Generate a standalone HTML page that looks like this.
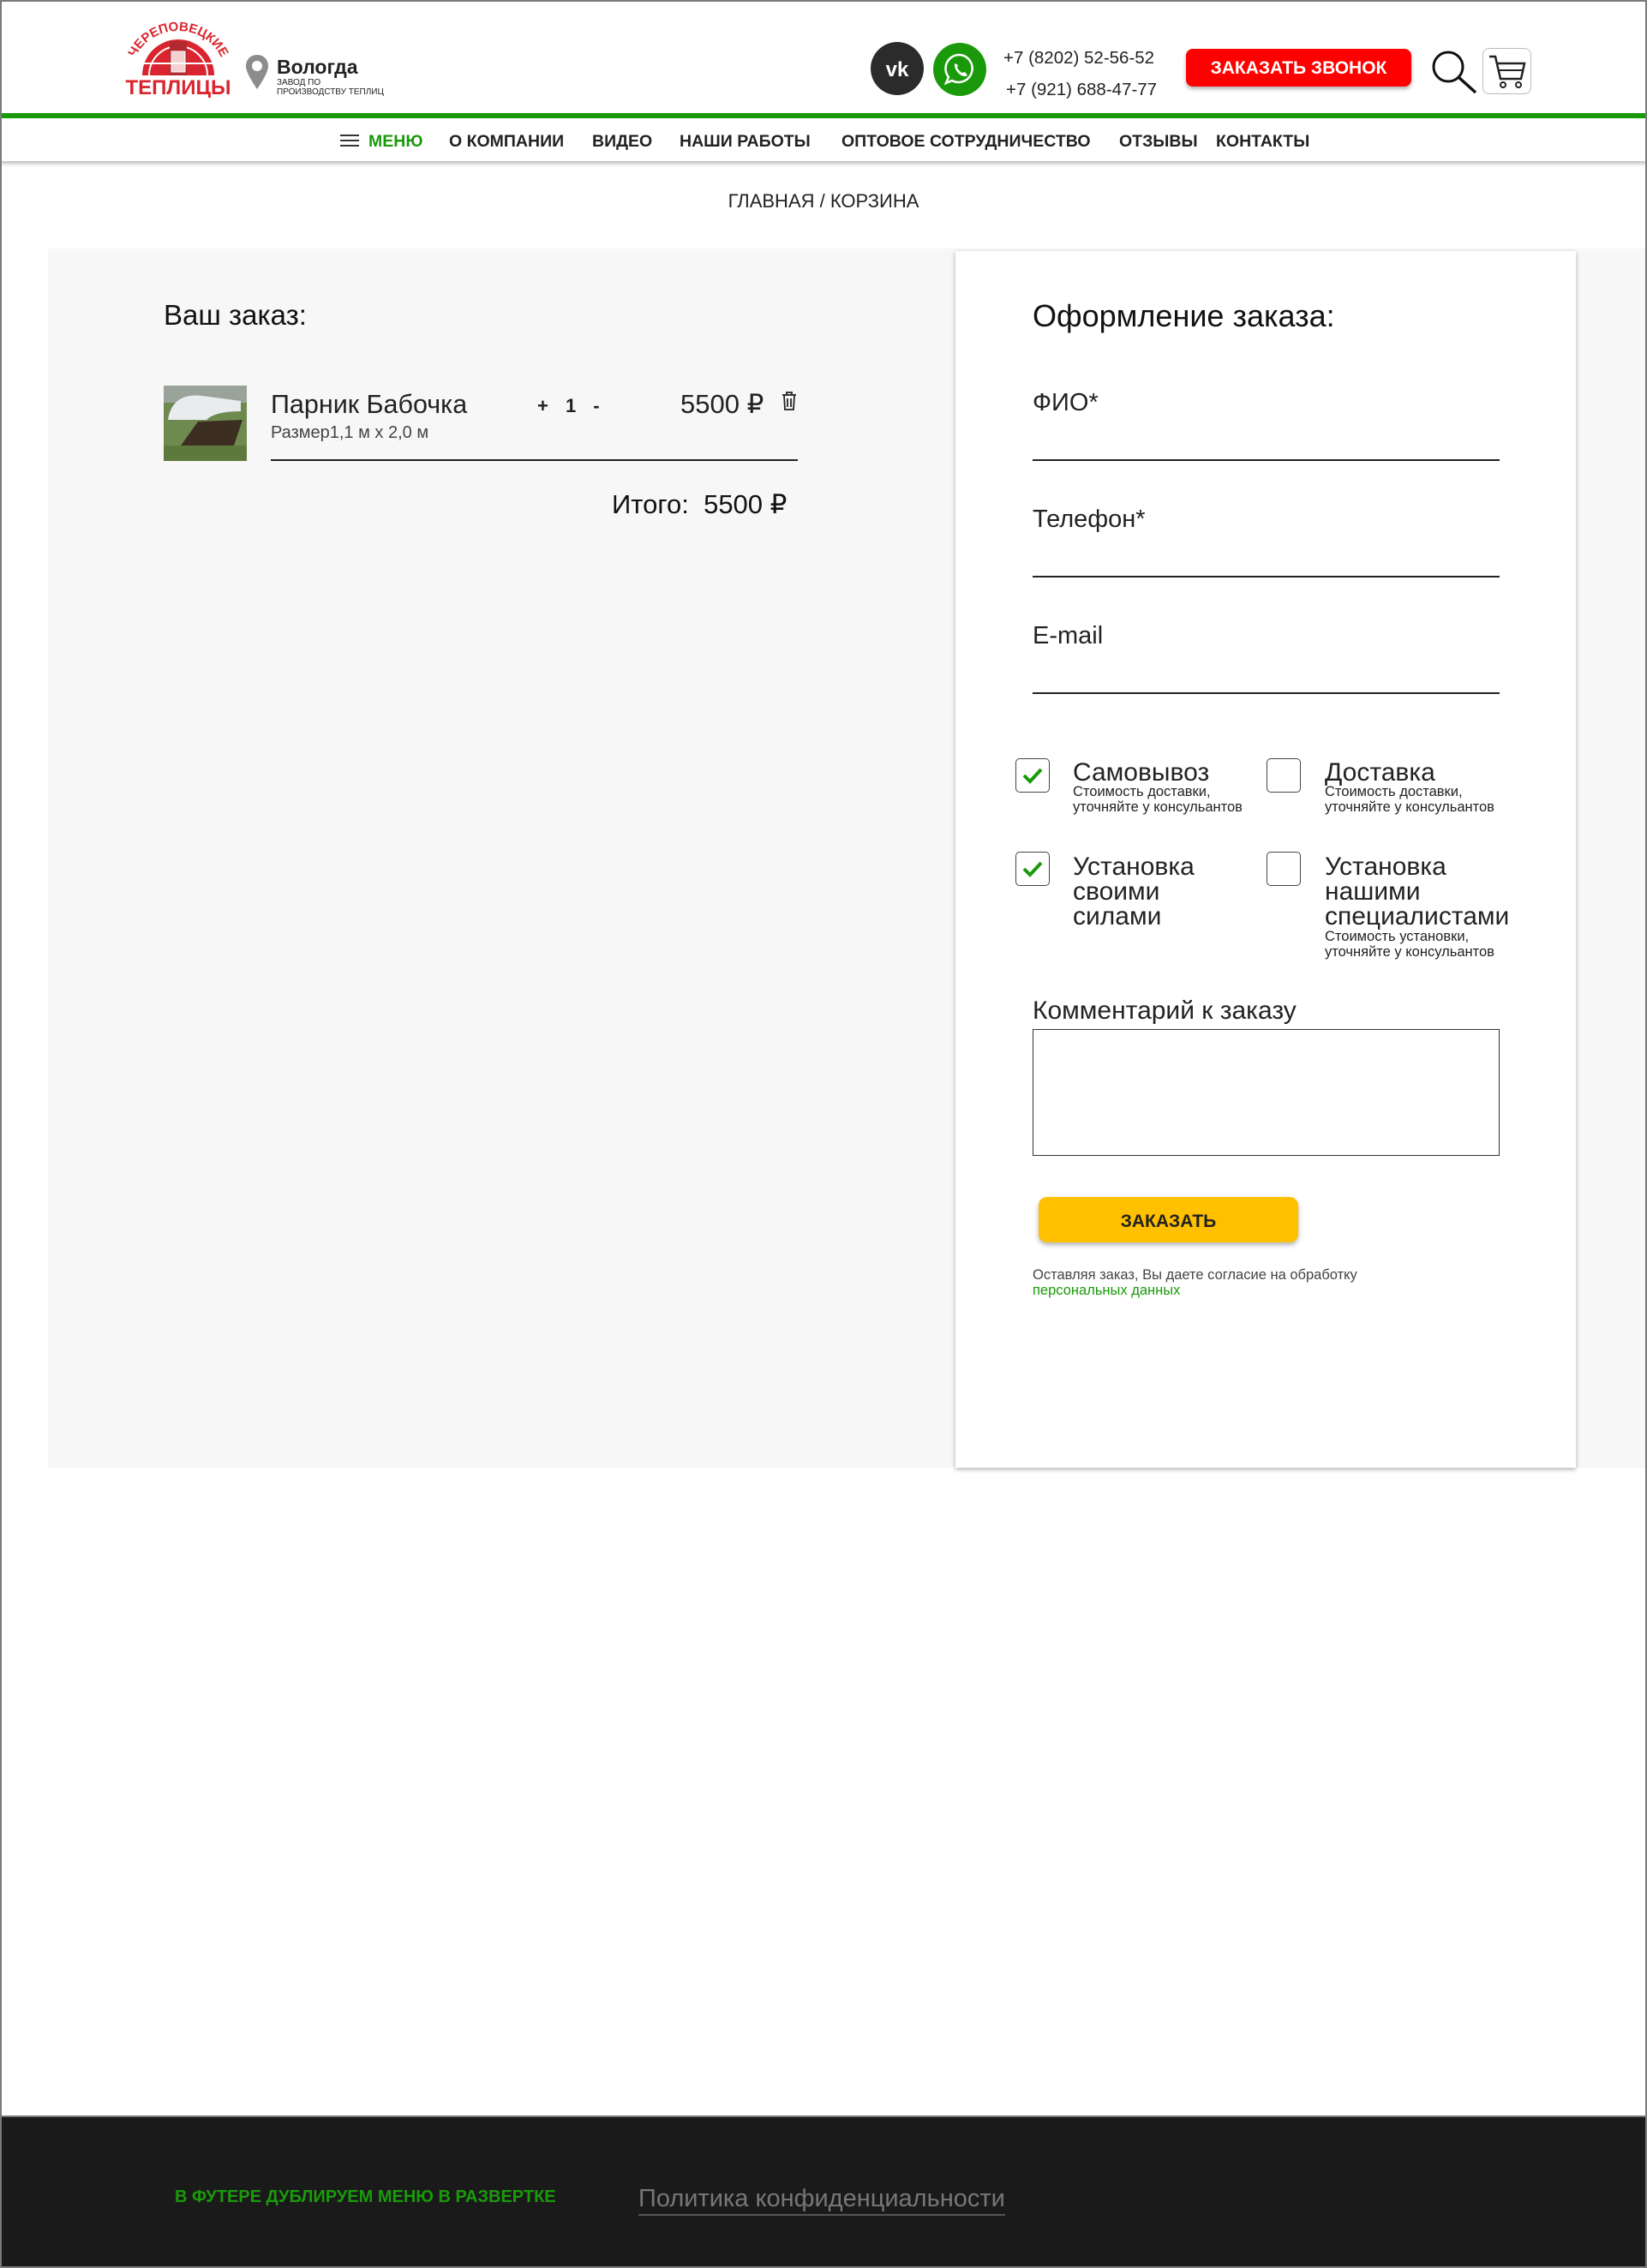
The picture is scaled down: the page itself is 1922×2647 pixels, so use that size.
<!DOCTYPE html>
<html><head><meta charset="utf-8"><style>
*{margin:0;padding:0;box-sizing:border-box}
body{width:1922px;height:2647px;position:relative;background:#fff;font-family:"Liberation Sans",sans-serif;color:#222;overflow:hidden}
.a{position:absolute;white-space:nowrap}
.frame{position:absolute;left:0;top:0;width:1922px;height:2647px;border:2px solid #7a7a7a;pointer-events:none;z-index:10}
.nav{font-weight:bold;font-size:19.5px;top:154px;color:#222}
.lbl{font-size:29px;color:#222;font-weight:300}
.line{position:absolute;left:1205px;width:545px;height:2px;background:#222}
.cb{position:absolute;width:40px;height:40px;border:1.5px solid #444;border-radius:5px;background:#fff}
.sub{font-size:16.5px;line-height:18px;color:#222}
.big{font-size:30px;line-height:29px;color:#222}
</style></head><body>
<div class="frame"></div>

<!-- header -->
<svg class="a" style="left:140px;top:22px" width="136" height="92" viewBox="0 0 136 92">
<defs><path id="arc" d="M14 64 A54 50 0 0 1 122 64"/></defs>
<path d="M26 66 A42 42 0 0 1 110 66 Z" fill="#d9252f"/>
<path d="M34 66 A34 34 0 0 1 102 66" fill="none" stroke="#fff" stroke-width="2"/>
<rect x="58" y="26" width="20" height="40" fill="#b02a30"/>
<rect x="60" y="38" width="16" height="24" fill="#f5d0d2" stroke="#fff" stroke-width="1"/>
<line x1="26" y1="52" x2="110" y2="52" stroke="#fff" stroke-width="2"/>
<text font-size="15" font-weight="bold" fill="#d9252f" font-family="Liberation Sans"><textPath href="#arc" startOffset="50%" text-anchor="middle">ЧЕРЕПОВЕЦКИЕ</textPath></text>
<text x="68" y="88" font-size="24" font-weight="bold" fill="#d9252f" text-anchor="middle" font-family="Liberation Sans">ТЕПЛИЦЫ</text>
</svg>
<svg class="a" style="left:285px;top:62px" width="30" height="44" viewBox="0 0 30 44"><path d="M15 2 C7 2 2 8 2 15 C2 24 15 42 15 42 C15 42 28 24 28 15 C28 8 23 2 15 2 Z" fill="#8c8c8c"/><circle cx="15" cy="15" r="6" fill="#fff"/></svg>
<div class="a" style="left:323px;top:65px;font-size:23px;font-weight:bold;color:#222">Вологда</div>
<div class="a" style="left:323px;top:91px;font-size:10px;line-height:11px;color:#222">ЗАВОД ПО<br>ПРОИЗВОДСТВУ ТЕПЛИЦ</div>

<svg class="a" style="left:1016px;top:49px" width="62" height="62" viewBox="0 0 62 62"><circle cx="31" cy="31" r="31" fill="#2b2b2b"/><text x="31" y="40" font-size="24" font-weight="bold" fill="#fff" text-anchor="middle" font-family="Liberation Sans">vk</text></svg>
<svg class="a" style="left:1089px;top:50px" width="62" height="62" viewBox="0 0 62 62"><circle cx="31" cy="31" r="31" fill="#1a9a0a"/><path d="M31 14 A16 16 0 1 1 22 44 L15 47 L18 40 A16 16 0 0 1 31 14 Z" fill="none" stroke="#fff" stroke-width="2.5"/><path d="M25 24 Q24 30 30 36 Q36 41 40 38 L37 34 L34 35 Q30 33 28 29 L29 26 Z" fill="#fff"/></svg>
<div class="a" style="left:1171px;top:56px;font-size:20.5px;color:#222">+7 (8202) 52-56-52</div>
<div class="a" style="left:1174px;top:93px;font-size:20.5px;color:#222">+7 (921) 688-47-77</div>
<div class="a" style="left:1384px;top:57px;width:263px;height:44px;background:#ff0000;border-radius:8px;box-shadow:0 3px 5px rgba(0,0,0,.3);color:#fff;font-size:21px;font-weight:bold;text-align:center;line-height:46px">ЗАКАЗАТЬ ЗВОНОК</div>
<svg class="a" style="left:1670px;top:58px" width="54" height="52" viewBox="0 0 54 52"><circle cx="20" cy="20" r="17" fill="none" stroke="#111" stroke-width="3"/><line x1="32" y1="32" x2="52" y2="50" stroke="#111" stroke-width="3.5"/></svg>
<div class="a" style="left:1730px;top:56px;width:57px;height:54px;border:1px solid #bbb;border-radius:8px"></div>
<svg class="a" style="left:1735px;top:62px" width="48" height="44" viewBox="0 0 48 44"><path d="M3 4 H10 L16 30 H40 L44 12 H12" fill="none" stroke="#222" stroke-width="2.5"/><line x1="14" y1="20" x2="42" y2="20" stroke="#222" stroke-width="2"/><circle cx="19" cy="37" r="3" fill="none" stroke="#222" stroke-width="2"/><circle cx="37" cy="37" r="3" fill="none" stroke="#222" stroke-width="2"/></svg>

<div class="a" style="left:0;top:132px;width:1922px;height:6px;background:#1a9a0a"></div>
<div class="a" style="left:0;top:138px;width:1922px;height:50px;background:#fff;box-shadow:0 3px 4px rgba(0,0,0,.25)"></div>
<svg class="a" style="left:397px;top:156px" width="22" height="17"><rect y="1" width="22" height="2" fill="#333"/><rect y="7" width="22" height="2" fill="#333"/><rect y="13" width="22" height="2" fill="#333"/></svg>
<div class="a nav" style="left:430px;color:#1a9a0a">МЕНЮ</div>
<div class="a nav" style="left:524px">О КОМПАНИИ</div>
<div class="a nav" style="left:691px">ВИДЕО</div>
<div class="a nav" style="left:793px">НАШИ РАБОТЫ</div>
<div class="a nav" style="left:982px">ОПТОВОЕ СОТРУДНИЧЕСТВО</div>
<div class="a nav" style="left:1306px">ОТЗЫВЫ</div>
<div class="a nav" style="left:1419px">КОНТАКТЫ</div>

<div class="a" style="left:0;width:1922px;top:222px;text-align:center;font-size:22px;color:#222">ГЛАВНАЯ / КОРЗИНА</div>

<!-- grey area -->
<div class="a" style="left:56px;top:290px;width:1864px;height:1423px;background:#f7f7f7"></div>
<div class="a" style="left:1115px;top:293px;width:724px;height:1420px;background:#fff;box-shadow:0 2px 5px rgba(0,0,0,.3)"></div>

<div class="a" style="left:191px;top:349px;font-size:33px;color:#111">Ваш заказ:</div>
<svg class="a" style="left:191px;top:450px" width="97" height="88" viewBox="0 0 97 88"><rect width="97" height="88" fill="#6f8a4e"/><rect y="0" width="97" height="20" fill="#9aa39a"/><path d="M5 40 Q10 8 45 12 L90 18 L90 30 Q60 30 50 40 Z" fill="#e8ecef"/><path d="M20 70 L40 42 L92 40 L80 76 Z" fill="#3d2e22"/><rect y="70" width="97" height="18" fill="#5d7a3c"/></svg>
<div class="a" style="left:316px;top:455px;font-size:30.5px;color:#222">Парник Бабочка</div>
<div class="a" style="left:316px;top:494px;font-size:20px;color:#444">Размер1,1 м х 2,0 м</div>
<div class="a" style="left:627px;top:461px;font-size:22px;font-weight:bold;color:#222;word-spacing:14px">+ 1 -</div>
<div class="a" style="left:794px;top:454px;font-size:31px;color:#222">5500 ₽</div>
<svg class="a" style="left:911px;top:456px" width="20" height="24" viewBox="0 0 20 24"><path d="M2 5 H18 M7 5 V2 H13 V5 M4 5 L5 22 H15 L16 5 M8 9 V19 M12 9 V19" fill="none" stroke="#222" stroke-width="1.8"/></svg>
<div class="a" style="left:316px;top:536px;width:615px;height:2px;background:#222"></div>
<div class="a" style="left:714px;top:571px;font-size:31px;color:#111">Итого:&nbsp; 5500 ₽</div>

<!-- form -->
<div class="a" style="left:1205px;top:348px;font-size:36px;color:#111">Оформление заказа:</div>
<div class="a lbl" style="left:1205px;top:454px">ФИО*</div>
<div class="line" style="top:536px"></div>
<div class="a lbl" style="left:1205px;top:590px">Телефон*</div>
<div class="line" style="top:672px"></div>
<div class="a lbl" style="left:1205px;top:726px">E-mail</div>
<div class="line" style="top:808px"></div>

<div class="cb" style="left:1185px;top:885px"></div>
<svg class="a" style="left:1193px;top:895px" width="24" height="20"><path d="M2 10 L9 17 L22 3" fill="none" stroke="#1a9a0a" stroke-width="4"/></svg>
<div class="a big" style="left:1252px;top:887px">Самовывоз</div>
<div class="a sub" style="left:1252px;top:915px">Стоимость доставки,<br>уточняйте у консульантов</div>
<div class="cb" style="left:1478px;top:885px"></div>
<div class="a big" style="left:1546px;top:887px">Доставка</div>
<div class="a sub" style="left:1546px;top:915px">Стоимость доставки,<br>уточняйте у консульантов</div>

<div class="cb" style="left:1185px;top:994px"></div>
<svg class="a" style="left:1193px;top:1004px" width="24" height="20"><path d="M2 10 L9 17 L22 3" fill="none" stroke="#1a9a0a" stroke-width="4"/></svg>
<div class="a big" style="left:1252px;top:997px">Установка<br>своими<br>силами</div>
<div class="cb" style="left:1478px;top:994px"></div>
<div class="a big" style="left:1546px;top:997px">Установка<br>нашими<br>специалистами</div>
<div class="a sub" style="left:1546px;top:1084px">Стоимость установки,<br>уточняйте у консульантов</div>

<div class="a" style="left:1205px;top:1163px;font-size:30px;color:#222">Комментарий к заказу</div>
<div class="a" style="left:1205px;top:1201px;width:545px;height:148px;border:1.5px solid #333;background:#fff"></div>
<div class="a" style="left:1212px;top:1397px;width:303px;height:53px;background:#ffc000;border-radius:10px;box-shadow:0 3px 6px rgba(0,0,0,.3);text-align:center;line-height:58px;font-size:21px;font-weight:bold;color:#222">ЗАКАЗАТЬ</div>
<div class="a" style="left:1205px;top:1479px;font-size:16.5px;line-height:18px;color:#444">Оставляя заказ, Вы даете согласие на обработку<br><span style="color:#1a9a0a">персональных данных</span></div>

<!-- footer -->
<div class="a" style="left:0;top:2469px;width:1922px;height:178px;background:#1a1a1a;border-top:2px solid #777"></div>
<div class="a" style="left:204px;top:2553px;font-size:20px;font-weight:bold;color:#1a9a0a">В ФУТЕРЕ ДУБЛИРУЕМ МЕНЮ В РАЗВЕРТКЕ</div>
<div class="a" style="left:745px;top:2550px;font-size:29px;color:#777;border-bottom:2px solid #555;padding-bottom:1px">Политика конфиденциальности</div>
</body></html>
